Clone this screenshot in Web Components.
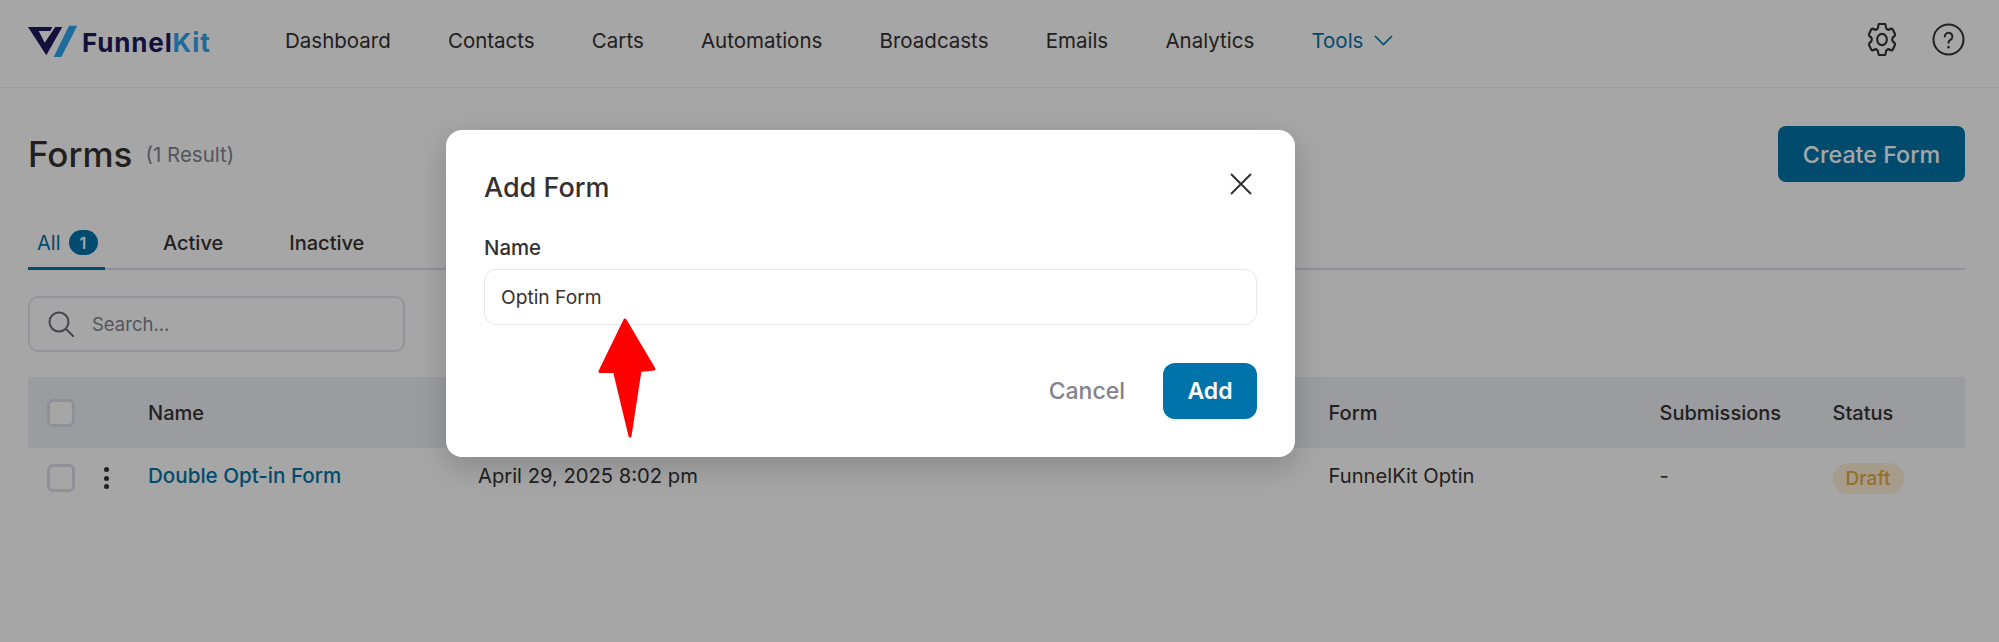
<!DOCTYPE html>
<html lang="en"><head><meta charset="utf-8"><title>Forms</title>
<style>
html,body{margin:0;padding:0;background:#fff}
body{width:1999px;height:642px;overflow:hidden;position:relative;font-family:Inter,"Liberation Sans",sans-serif;color:#353030}
</style></head><body>
<fk-app></fk-app>
<template id="t-app"><style>
:host{display:block;width:1999px;height:642px;position:relative;overflow:hidden}
.overlay{position:absolute;inset:0;background:rgba(0,0,0,.35)}
</style>
<fk-header></fk-header>
<fk-page></fk-page>
<div class="overlay"></div>
<fk-modal></fk-modal>
<fk-arrow></fk-arrow>
</template>

<template id="t-header"><style>
:host{display:flex;align-items:center;height:82px;padding:0 34px 5px 28px;border-bottom:1px solid #efeff2}
.logo{display:flex;align-items:center;width:257px;height:60px;gap:4px}
.logo svg{display:block;flex:none;overflow:visible}
.word{font-size:26px;font-weight:700;color:#1e1a5e;letter-spacing:.85px;position:relative;top:1px}
.word b{color:#2ea6ee;font-weight:700}
nav{display:flex;gap:57.2px;flex:1;font-size:20.5px;align-items:center;position:relative;top:-1px}
nav span.t{color:#0073aa;display:flex;align-items:center;gap:11px}
.icons{display:flex;gap:35px;align-items:center;position:relative;top:-2px}
svg{display:block}
</style>
<div class="logo">
<svg width="50" height="32" viewBox="0 -2 50 32"><path d="M0 0H24.300L22.300 4H10.700L16.700 15.700L27.300 0H34.300L18.300 28.300Z" fill="#1e1a5e"/><path d="M41 -1.300H49.300L33.300 30H25.700Z" fill="#2ea6ee"/></svg>
<span class="word">Funnel<b>Kit</b></span></div>
<nav><span>Dashboard</span><span>Contacts</span><span>Carts</span><span>Automations</span><span>Broadcasts</span><span>Emails</span><span>Analytics</span><span class="t">Tools <svg width="19" height="11" viewBox="0 0 19 11" fill="none" stroke="#0073aa" stroke-width="1.600"><path d="M1 1l8.500 8.500L18 1"/></svg></span></nav>
<div class="icons">
<svg width="30" height="33" viewBox="2.100 2.600 19.800 18.800" preserveAspectRatio="none" fill="none" stroke="#353030" stroke-width="1.350" stroke-linejoin="round"><path d="M9.594 3.94c.09-.542.56-.94 1.11-.94h2.593c.55 0 1.02.398 1.11.94l.213 1.281c.063.374.313.686.645.87.074.04.147.083.22.127.325.196.72.257 1.075.124l1.217-.456a1.125 1.125 0 0 1 1.37.49l1.296 2.247a1.125 1.125 0 0 1-.26 1.431l-1.003.827c-.293.241-.438.613-.43.992a7.723 7.723 0 0 1 0 .255c-.008.378.137.75.43.991l1.004.827c.424.35.534.955.26 1.43l-1.298 2.247a1.125 1.125 0 0 1-1.369.491l-1.217-.456c-.355-.133-.75-.072-1.076.124a6.47 6.47 0 0 1-.22.128c-.331.183-.581.495-.644.869l-.213 1.281c-.09.543-.56.94-1.11.94h-2.594c-.55 0-1.019-.398-1.11-.94l-.213-1.281c-.062-.374-.312-.686-.644-.87a6.52 6.52 0 0 1-.22-.127c-.325-.196-.72-.257-1.076-.124l-1.217.456a1.125 1.125 0 0 1-1.369-.49l-1.297-2.247a1.125 1.125 0 0 1 .26-1.431l1.004-.827c.292-.24.437-.613.43-.991a6.932 6.932 0 0 1 0-.255c.007-.38-.138-.751-.43-.992l-1.004-.827a1.125 1.125 0 0 1-.26-1.43l1.297-2.247a1.125 1.125 0 0 1 1.37-.491l1.216.456c.356.133.751.072 1.076-.124.072-.044.146-.086.22-.128.332-.183.582-.495.644-.869l.214-1.28Z"/><circle cx="12" cy="12" r="3.200"/></svg>
<svg width="33" height="33" viewBox="0 0 33 33" fill="none" stroke="#353030" stroke-width="2" stroke-linecap="round"><circle cx="16.500" cy="16.500" r="15"/><path d="M12.800 13.500a3.800 3.800 0 1 1 5.900 3.200c-1.400.9-2.200 1.500-2.200 3"/><path d="M16.500 24v.2" stroke-width="2.400"/></svg>
</div>
</template>

<template id="t-page"><style>
:host{display:block;padding:0 34px 0 28px}
.top{display:flex;justify-content:space-between;align-items:center;height:56px;margin-top:38px}
.ttl{display:flex;align-items:center;gap:13px}
h1{margin:0;font-size:35px;font-weight:500;color:#353030;line-height:44px}
.ttl span{font-size:20.500px;color:#82838e}
.btn{width:187px;height:56px;border-radius:8px;background:#0073aa;color:#fff;font-size:23.300px;font-weight:500;display:flex;align-items:center;justify-content:center}
.tabs{display:flex;height:44px;margin-top:42px;border-bottom:2px solid #dedfea;font-size:20px;font-weight:500}
.tab{display:flex;align-items:center;gap:8px;padding:0 0 6px;height:44px;box-sizing:border-box}
.on{color:#0073aa;font-weight:400;border-bottom:3px solid #0073aa;height:46px;width:77px;padding:0 0 6px 9px;flex:none}
.a{margin-left:58px}.i{margin-left:66px}
.badge{width:29px;height:25px;border-radius:13px;background:#0073aa;color:#fff;font-size:16px;font-weight:600;display:flex;align-items:center;justify-content:center}
.search{display:flex;align-items:center;width:377px;height:56px;border:2px solid #e3e4ee;border-radius:10px;box-sizing:border-box;margin-top:26px;padding-left:18px;gap:18px;font-size:18.500px;color:#82838e}
svg{display:block}
.table{display:grid;grid-template-columns:120px 330px 850.5px 331px 173px 1fr;margin-top:25px;font-size:20.200px}
.h{height:71px;background:#eff0f6;display:flex;align-items:center;font-weight:500;font-size:20px}
.r{height:60px;display:flex;align-items:center;box-sizing:border-box}
.tx{padding-bottom:5px}
.first{padding-left:19px;gap:20px;box-sizing:border-box}
.cb{width:28px;height:28px;border:3px solid #dedfea;border-radius:6px;box-sizing:border-box;background:#fff;flex:none}
.dots{display:flex;flex-direction:column;gap:3.500px;margin-left:9px}
.dots i{display:block;width:5px;height:5px;border-radius:50%;background:#353030}
.link{color:#0073aa;font-weight:500;font-size:20.600px}
.pill{display:flex;align-items:center;justify-content:center;width:71px;height:31px;border-radius:16px;background:#fff0d6;color:#e6a93f;font-weight:500;font-size:19px}
</style>
<div class="top"><div class="ttl"><h1>Forms</h1><span>(1 Result)</span></div><div class="btn">Create Form</div></div>
<div class="tabs"><div class="tab on">All <span class="badge">1</span></div><div class="tab a">Active</div><div class="tab i">Inactive</div></div>
<div class="search"><svg width="26" height="26" viewBox="0 0 26 26" fill="none" stroke="#6b6c76" stroke-width="2"><circle cx="11" cy="11" r="9.500"/><path d="M18 18l8 8"/></svg>Search...</div>
<div class="table">
<div class="h first"><span class="cb"></span></div><div class="h">Name</div><div class="h"></div><div class="h">Form</div><div class="h">Submissions</div><div class="h">Status</div>
<div class="r first"><span class="cb"></span><span class="dots"><i></i><i></i><i></i></span></div><div class="r tx link">Double Opt-in Form</div><div class="r tx">April 29, 2025 8:02 pm</div><div class="r tx">FunnelKit Optin</div><div class="r tx">-</div><div class="r"><span class="pill">Draft</span></div>
</div>
</template>

<template id="t-modal"><style>
:host{position:absolute;left:446px;top:130px;width:849px;height:327px;background:#fff;border-radius:16px;box-sizing:border-box;padding:34px 38px 38px;box-shadow:0 10px 30px rgba(0,0,0,.18);display:flex;flex-direction:column}
.head{display:flex;justify-content:space-between;align-items:center;height:46px;padding-right:5px;box-sizing:border-box}
.head svg{position:relative;top:-3px}
h2{margin:0;font-size:27px;font-weight:500;color:#353030}
svg{display:block}
label{display:block;margin-top:26px;font-size:20.400px;font-weight:500;line-height:24px;color:#353030}
.inp{display:flex;align-items:center;height:56px;margin-top:8.500px;border:1.5px solid #e6e6f2;border-radius:12px;box-sizing:border-box;padding-left:16px;font-size:19.200px;color:#353030}
.foot{display:flex;justify-content:flex-end;align-items:center;gap:38px;margin-top:38.500px}
.c{font-size:23px;font-weight:500;color:#82838e}
.add{width:94px;height:56px;border-radius:12px;background:#0073aa;color:#fff;font-size:23px;font-weight:600;display:flex;align-items:center;justify-content:center}
</style>
<div class="head"><h2>Add Form</h2><svg width="22" height="22" viewBox="0 0 22 22" stroke="#353030" stroke-width="2"><path d="M1 1l20 20M21 1L1 21"/></svg></div>
<label>Name</label>
<div class="inp">Optin Form</div>
<div class="foot"><span class="c">Cancel</span><span class="add">Add</span></div>
</template>

<template id="t-arrow"><style>
:host{position:absolute;left:595px;top:315px;width:64px;height:126px}
svg{display:block}
</style>
<svg width="64" height="126" viewBox="595 315 64 126"><path d="M625 320L654 369L640 370.500L630 436L614.500 371.500L600 371.500Z" fill="#ff0000" stroke="#ff0000" stroke-width="3" stroke-linejoin="round"/></svg>
</template>

<script>
[['fk-app','t-app'],['fk-header','t-header'],['fk-page','t-page'],['fk-modal','t-modal'],['fk-arrow','t-arrow']].forEach(([n,t])=>{
customElements.define(n,class extends HTMLElement{constructor(){super();this.attachShadow({mode:'open'}).appendChild(document.getElementById(t).content.cloneNode(true));}});
});
</script>
</body></html>
